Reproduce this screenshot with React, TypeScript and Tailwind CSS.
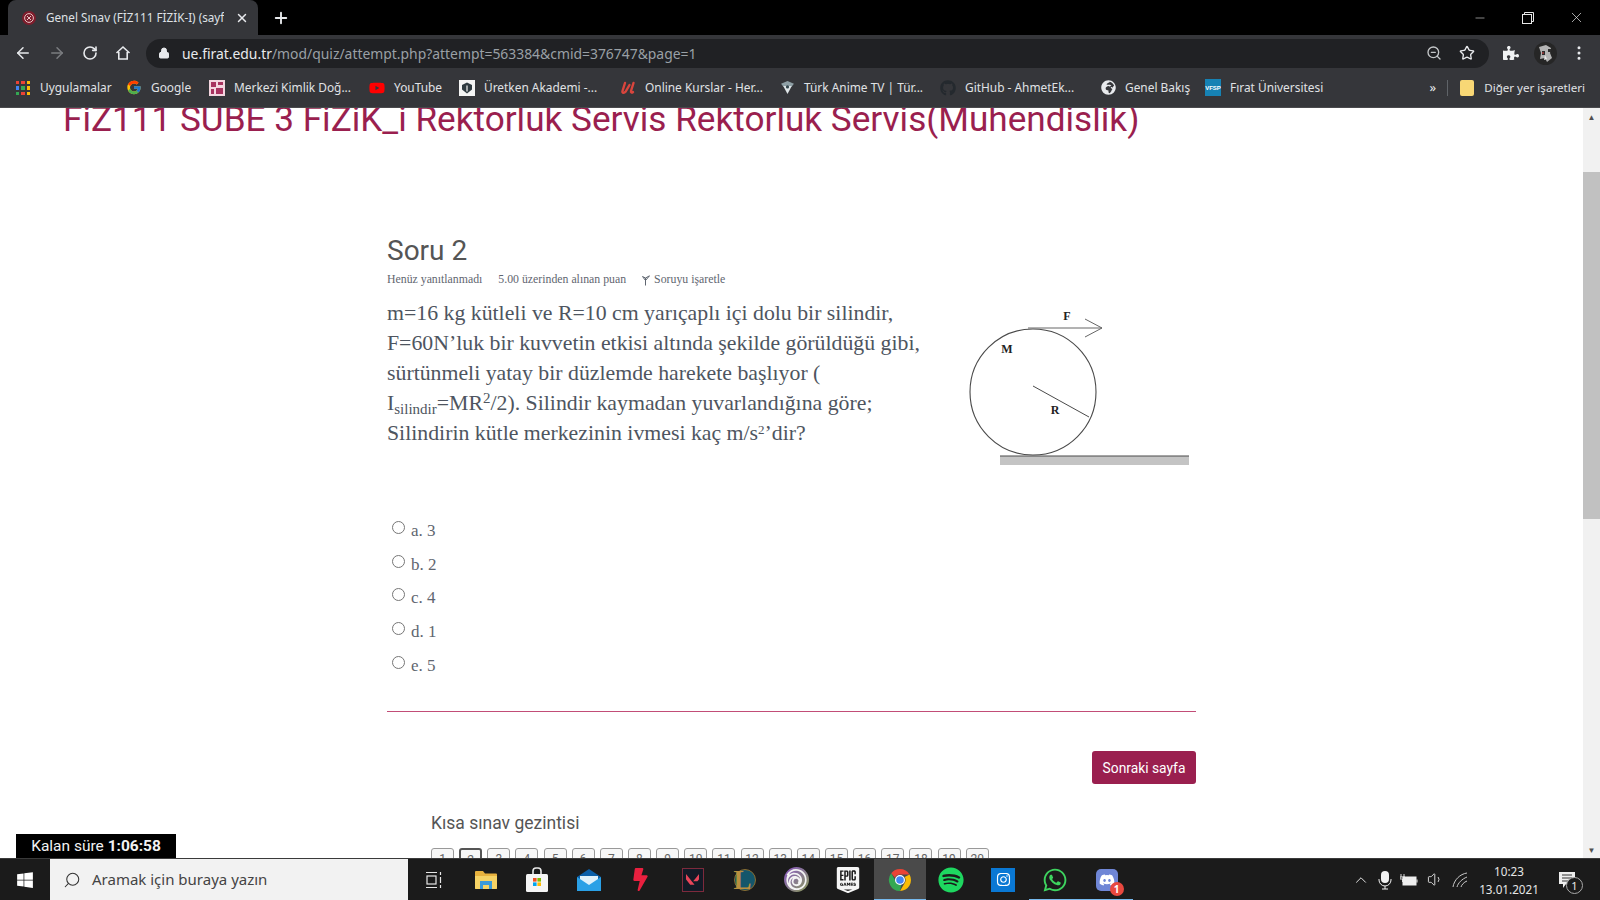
import { ArrowLeft, ArrowRight, RotateCw, Lock, Star, ZoomOut, Plus, X, Minus, EllipsisVertical, ChevronUp, Volume1, Search } from "lucide-react"
import { FaYoutube, FaGithub, FaGlobeAfrica, FaWindows, FaSpotify, FaWhatsapp, FaDiscord, FaPuzzlePiece, FaInstagram, FaBolt } from "react-icons/fa"
import { FcGoogle } from "react-icons/fc"
import { SiUbisoft, SiValorant, SiEpicgames } from "react-icons/si"

const body = "font-['Liberation_Serif',serif]"
const ui = "font-['Noto_Sans',sans-serif]"

function HomeIcon() {
    return <svg width="16" height="16" viewBox="0 0 16 16" fill="none" stroke="#e8eaed" strokeWidth="1.6">
        <path d="M1.5 8 8 2l6.5 6M3.8 7v7h8.4V7" />
    </svg>
}

function AppsIcon() {
    const colors = ["#ea4335", "#ea4335", "#fbbc04", "#4285f4", "#34a853", "#fbbc04", "#34a853", "#ea4335", "#fbbc04"]
    return <div className="grid grid-cols-3 gap-[2px] w-[14px]">
        {colors.map((c, i) => <span key={i} className="w-[3.3px] h-[3.3px]" style={{ backgroundColor: c }} />)}
    </div>
}

function Favicon() {
    return <svg width="16" height="16" viewBox="0 0 16 16">
        <circle cx="8" cy="8" r="7" fill="#7d1d2c" />
        <circle cx="8" cy="8" r="4.4" fill="none" stroke="#e6c2c2" strokeWidth="1" />
        <path d="M6 6l4 4M10 6l-4 4" stroke="#e6c2c2" strokeWidth="1" />
    </svg>
}

function MerkeziIcon() {
    return <svg width="16" height="16" viewBox="0 0 16 16">
        <rect width="16" height="16" fill="#f3d5df" />
        <rect x="2" y="2" width="5" height="5" fill="#a8325f" />
        <rect x="9" y="2" width="5" height="3" fill="#a8325f" />
        <rect x="2" y="9" width="3" height="5" fill="#a8325f" />
        <rect x="7" y="8" width="7" height="6" fill="#a8325f" />
    </svg>
}

function UretkenIcon() {
    return <svg width="16" height="16" viewBox="0 0 16 16">
        <rect width="16" height="16" fill="#f4f4f4" />
        <path d="M8 2.5 13 5v4.5L8 13.5 3 9.500V5z" fill="#2f3a40" />
        <path d="M8 5.500v6" stroke="#f4f4f4" strokeWidth="1.2" />
    </svg>
}

function UdemyIcon() {
    return <svg width="16" height="16" viewBox="0 0 16 16" fill="none" stroke="#d9453d" strokeWidth="2.4" strokeLinecap="round">
        <path d="M5 3 2.500 11c-.6 2 1.500 2.500 3 .8L9.500 5M13.500 3 11 11c-.4 1.600.8 2 2 1" />
    </svg>
}

function AnimeIcon() {
    return <svg width="15" height="15" viewBox="0 0 14 14">
        <path d="M1 3.500 7 1l6 2.500-2 2.500H3z" fill="#8fa0a6" />
        <path d="M3 5.500h8L7 13z" fill="#dfe6e8" />
        <circle cx="7" cy="6.500" r="1.500" fill="#34474e" />
    </svg>
}

function VfspIcon() {
    return <div className="w-[17px] h-[17px] bg-[#1682b4] flex items-center justify-center text-white font-bold text-[6px] leading-none font-['Liberation_Sans',sans-serif]">VFSP</div>
}

function Avatar() {
    return <svg width="23" height="23" viewBox="0 0 23 23">
        <circle cx="11.500" cy="11.500" r="11.500" fill="#262626" />
        <path d="M5 5 12 3l5 3-1 5 2 5-5 4-2-4-5 1 1-6z" fill="#b4b4b4" />
        <path d="M8 9h3v4H8zM14 7h3v3h-3z" fill="#2c2c2c" />
        <path d="M11 13l2 4-3 1z" fill="#e8e8e8" />
        <circle cx="9" cy="11" r="1" fill="#a23a3a" />
    </svg>
}

function FlagIcon() {
    return <svg width="8" height="11" viewBox="0 0 8 11" fill="none" stroke="#5f6670" strokeWidth="1">
        <path d="M.5 1.500 3.500 3 7.500.8 M3.500 3v7.500M.5 1.500l3 4 4-4.700" />
    </svg>
}

function ChromeIcon() {
    return <svg width="24" height="24" viewBox="0 0 24 24">
        <path d="M12 1a11 11 0 0 1 9.500 5.500H12a5.500 5.500 0 0 0-5 3.200L3.200 5.300A11 11 0 0 1 12 1z" fill="#ea4335" />
        <path d="M21.500 6.500A11 11 0 0 1 12 23l4.800-8.200A5.500 5.500 0 0 0 16.700 9z" fill="#fbbc04" />
        <path d="M12 23A11 11 0 0 1 3.200 5.300L7.800 13.500a5.500 5.500 0 0 0 5.500 3z" fill="#34a853" />
        <circle cx="12" cy="12" r="4.400" fill="#4285f4" stroke="#fff" strokeWidth="1.200" />
    </svg>
}

function TaskView() {
    return <svg width="18" height="18" viewBox="0 0 18 18" fill="none" stroke="#e6e6e6" strokeWidth="1.200">
        <path d="M1 1.500h11M1 16.500h11" />
        <rect x="2" y="5" width="9" height="8" />
        <path d="M15.500 1v3M15.500 6v6M15.500 14v3" />
    </svg>
}

function ExplorerIcon() {
    return <svg width="24" height="22" viewBox="0 0 24 22">
        <path d="M1 3a1 1 0 0 1 1-1h7l2 2.500h11a1 1 0 0 1 1 1V19a1 1 0 0 1-1 1H2a1 1 0 0 1-1-1z" fill="#e8b23e" />
        <path d="M1 7h22v12a1 1 0 0 1-1 1H2a1 1 0 0 1-1-1z" fill="#f6d365" />
        <path d="M6 12h12v8h-3v-4H9v4H6z" fill="#3b9ad9" />
    </svg>
}

function StoreIcon() {
    return <svg width="24" height="26" viewBox="0 0 24 26">
        <path d="M8 7V4a3 3 0 0 1 3-3h2a3 3 0 0 1 3 3v3" fill="none" stroke="#e8e8e8" strokeWidth="1.600" />
        <rect x="1" y="7" width="22" height="18" rx="1.500" fill="#f5f5f5" />
        <rect x="8" y="11" width="3.600" height="3.600" fill="#f25022" />
        <rect x="12.400" y="11" width="3.600" height="3.600" fill="#7fba00" />
        <rect x="8" y="15.400" width="3.600" height="3.600" fill="#00a4ef" />
        <rect x="12.400" y="15.400" width="3.600" height="3.600" fill="#ffb900" />
    </svg>
}

function MailIcon() {
    return <svg width="26" height="24" viewBox="0 0 26 24">
        <path d="M1 9 13 1l12 8v14H1z" fill="#0b5fa8" />
        <path d="M4 8h18v9l-9 4-9-4z" fill="#dff1fb" />
        <path d="M1 9v14h24V9L13 17z" fill="#2aa0e6" />
    </svg>
}

function LolIcon() {
    return <div className="relative w-[26px] h-[26px]">
        <div className="w-[22px] h-[22px] mt-[2px] rounded-full bg-[#14566b] ml-[3px] border border-[#8a6d30]" />
        <div className="absolute left-[2px] top-0 text-[27px] leading-[26px] font-bold text-[#b98f3e] font-['Liberation_Serif',serif]">L</div>
    </div>
}

function TrayMic() {
    return <svg width="14" height="20" viewBox="0 0 14 20" fill="none">
        <rect x="3" y="1" width="8" height="12" rx="4" fill="#f0f0f0" />
        <path d="M1 9v1a6 6 0 0 0 12 0V9M7 16v3M4 19h6" stroke="#f0f0f0" strokeWidth="1" />
    </svg>
}

function TrayBattery() {
    return <svg width="18" height="14" viewBox="0 0 18 14" fill="none">
        <rect x="3" y="4" width="13" height="8" fill="#eeeeee" stroke="#eeeeee" />
        <path d="M17 6.500v3" stroke="#eee" />
        <path d="M1 1v3M4 1v3M0 4h5v2H0zM2.500 6v3" stroke="#eee" strokeWidth=".9" />
    </svg>
}

function Diagram() {
    return <svg width="260" height="180" viewBox="0 0 260 180" fill="none" stroke="#4a4a4a" className="shrink-0 mt-[1px]">
        <circle cx="83" cy="93" r="63" strokeWidth="1.100" />
        <path d="M83 87 139 118" strokeWidth="1" />
        <path d="M78 29h74M135 20l17 9-17 9" stroke="#666" strokeWidth="1" />
        <rect x="50" y="157" width="189" height="9" fill="#c4c4c4" stroke="none" />
        <path d="M50 157h189" strokeWidth="1.200" />
        <text x="117" y="21" textAnchor="middle" fill="#222" stroke="none" className="font-['Liberation_Serif',serif] font-bold text-[12px]">F</text>
        <text x="57" y="54" textAnchor="middle" fill="#222" stroke="none" className="font-['Liberation_Serif',serif] font-bold text-[12px]">M</text>
        <text x="105" y="115" textAnchor="middle" fill="#222" stroke="none" className="font-['Liberation_Serif',serif] font-bold text-[12px]">R</text>
    </svg>
}

const bookmarks = [
    { label: "Uygulamalar", width: "w-[111px]", icon: <AppsIcon /> },
    { label: "Google", width: "w-[83px]", icon: <FcGoogle size={17} /> },
    { label: "Merkezi Kimlik Doğ...", width: "w-[160px]", icon: <MerkeziIcon /> },
    { label: "YouTube", width: "w-[90px]", icon: <FaYoutube size={16} color="#f00" /> },
    { label: "Üretken Akademi -...", width: "w-[161px]", icon: <UretkenIcon /> },
    { label: "Online Kurslar - Her...", width: "w-[159px]", icon: <UdemyIcon /> },
    { label: "Türk Anime TV | Tür...", width: "w-[161px]", icon: <AnimeIcon /> },
    { label: "GitHub - AhmetEk...", width: "w-[160px]", icon: <FaGithub size={16} color="#24292e" /> },
    { label: "Genel Bakış", width: "w-[105px]", icon: <FaGlobeAfrica size={15} color="#e8eaed" /> },
    { label: "Fırat Üniversitesi", width: "w-[110px]", icon: <VfspIcon /> },
]

const options = ["a. 3", "b. 2", "c. 4", "d. 1", "e. 5"]
const pages = Array.from({ length: 20 }, (_, i) => i + 1)

const taskApps = [
    { key: "task", icon: <TaskView /> },
    { key: "files", icon: <ExplorerIcon /> },
    { key: "store", icon: <StoreIcon /> },
    { key: "mail", icon: <MailIcon /> },
    { key: "bolt", icon: <FaBolt size={23} color="#e9203f" /> },
    { key: "valorant", icon: <div className="w-[22px] h-[24px] border border-[#7d2a3c] bg-[#121a26] flex items-center justify-center"><SiValorant size={13} color="#e8455a" /></div> },
    { key: "lol", icon: <LolIcon /> },
    { key: "ubi", icon: <div className="w-[25px] h-[25px] rounded-full bg-gradient-to-br from-[#8a4fc0] to-[#8a9a50] flex items-center justify-center"><SiUbisoft size={21} color="#f4f4f4" /></div> },
    { key: "epic", icon: <SiEpicgames size={26} color="#f5f5f5" /> },
    { key: "chrome", icon: <ChromeIcon />, active: true, running: true },
    { key: "spotify", icon: <FaSpotify size={26} color="#1ed760" /> },
    { key: "insta", icon: <div className="w-[24px] h-[24px] bg-[#0a78d4] flex items-center justify-center"><FaInstagram size={15} color="#fff" /></div> },
    { key: "whatsapp", icon: <FaWhatsapp size={26} color="#3ed45f" />, running: true },
    { key: "discord", icon: <div className="relative w-[22px] h-[22px] rounded-[5px] bg-[#6f86d6] flex items-center justify-center"><FaDiscord size={16} color="#fff" /><span className="absolute -right-[6px] -bottom-[5px] w-[14px] h-[14px] rounded-full bg-[#e8483f] text-white text-[10px] leading-[14px] text-center font-bold">1</span></div>, running: true },
]

export default function App() {
    return <div className={`h-screen w-screen overflow-hidden flex flex-col bg-white ${ui}`}>
        {/* tab strip */}
        <div className="h-[35px] bg-black flex items-end shrink-0">
            <div className="ml-[8px] w-[250px] h-[35px] bg-[#35363a] rounded-t-lg flex items-center pl-[13px] pr-[9px]">
                <Favicon />
                <span className="ml-[9px] w-[178px] overflow-hidden whitespace-nowrap text-[11.7px] text-[#dfe1e5]">Genel Sınav (FİZ111 FİZİK-I) (sayfa</span>
                <X size={14} color="#e8eaed" strokeWidth={2.5} className="ml-auto" />
            </div>
            <Plus size={18} color="#e8eaed" strokeWidth={2.5} className="ml-[14px] mb-[8px]" />
            <div className="ml-auto h-[35px] flex items-center text-[#e8e8e8]">
                <div className="w-[48px] flex justify-center"><Minus size={14} strokeWidth={1} /></div>
                <div className="w-[48px] flex justify-center">
                    <svg width="12" height="12" viewBox="0 0 12 12" fill="none" stroke="#e8e8e8"><rect x=".5" y="2.500" width="9" height="9" /><path d="M2.500 2.500V.5h9v9H9.500" /></svg>
                </div>
                <div className="w-[48px] flex justify-center"><X size={17} strokeWidth={1} /></div>
            </div>
        </div>

        {/* toolbar */}
        <div className="h-[36px] bg-[#35363a] flex items-center shrink-0 pl-[14px] pr-[12px]">
            <ArrowLeft size={18} color="#e8eaed" />
            <ArrowRight size={18} color="#7b7d80" className="ml-[16px]" />
            <RotateCw size={16} color="#e8eaed" strokeWidth={2.4} className="ml-[16px]" />
            <div className="ml-[17px]"><HomeIcon /></div>
            <div className="ml-[15px] flex-1 h-[29px] rounded-full bg-[#202124] flex items-center pl-[12px] pr-[14px]">
                <Lock size={12} color="#e8eaed" fill="#e8eaed" />
                <span className="ml-[12px] pt-[2px] text-[13.900px] text-[#e8eaed]">ue.firat.edu.tr<span className="text-[#9aa0a6]">/mod/quiz/attempt.php?attempt=563384&amp;cmid=376747&amp;page=1</span></span>
                <ZoomOut size={16} color="#c4c7c9" className="ml-auto" />
                <Star size={16} color="#e8eaed" className="ml-[17px]" />
            </div>
            <FaPuzzlePiece size={16} color="#f1f3f4" className="ml-[14px]" />
            <div className="ml-[15px]"><Avatar /></div>
            <EllipsisVertical size={18} color="#e8eaed" className="ml-[13px]" />
        </div>

        {/* bookmarks */}
        <div className="h-[37px] bg-[#35363a] flex items-center shrink-0 pl-[15px] pr-[15px] pb-[2px] border-b border-[#4a4a4d] text-[11.900px] text-[#e0e2e5]">
            <div className="flex items-center">
                {bookmarks.map(({ label, width, icon }) => <div key={label} className={`flex items-center gap-[9px] whitespace-nowrap ${width}`}>
                    <span className="w-[16px] flex justify-center">{icon}</span>
                    <span>{label}</span>
                </div>)}
            </div>
            <span className="ml-auto text-[13px] text-[#e8eaed]">»</span>
            <div className="ml-[11px] w-px h-[16px] bg-[#5f6368]" />
            <div className="ml-[12px] w-[14px] h-[16px] rounded-[2px] bg-[#f8d775]" />
            <span className="ml-[10px] text-[11.600px]">Diğer yer işaretleri</span>
        </div>

        {/* page */}
        <div className="relative flex-1 min-h-0 flex overflow-hidden">
            <main className="flex-1 min-w-0 overflow-hidden">
                <h1 className="mt-[-11px] ml-[63px] text-[35.150px] leading-[44px] whitespace-nowrap text-[#9a1f4f] font-['Roboto',sans-serif]">FiZ111 SUBE 3 FiZiK_i Rektorluk Servis Rektorluk Servis(Muhendislik)</h1>

                <div className="ml-[387px] w-[809px] mt-[92px]">
                    <h2 className="text-[28px] leading-[36px] text-[#555] font-['Roboto',sans-serif]">Soru 2</h2>
                    <div className={`mt-[2px] flex items-center text-[11.800px] leading-[16px] text-[#5f6670] ${body}`}>
                        <span>Henüz yanıtlanmadı</span>
                        <span className="ml-[16px]">5.00 üzerinden alınan puan</span>
                        <span className="ml-[16px] mr-[4px] mt-[2px]"><FlagIcon /></span>
                        <span>Soruyu işaretle</span>
                    </div>
                    <div className="flex mt-[11px]">
                        <div className={`w-[563px] shrink-0 text-[21.800px] leading-[30px] text-[#4e5560] ${body}`}>
                            <p>m=16 kg kütleli ve R=10 cm yarıçaplı içi dolu bir silindir,</p>
                            <p>F=60N’luk bir kuvvetin etkisi altında şekilde görüldüğü gibi,</p>
                            <p>sürtünmeli yatay bir düzlemde harekete başlıyor (</p>
                            <p>I<sub className="text-[15px]">silindir</sub>=MR<sup className="text-[15px]">2</sup>/2). Silindir kaymadan yuvarlandığına göre;</p>
                            <p>Silindirin kütle merkezinin ivmesi kaç m/s<sup className="text-[13px]">2</sup>’dir?</p>
                        </div>
                        <Diagram />
                    </div>

                    <div className="mt-[38px] flex flex-col">
                        {options.map((o) => <label key={o} className={`h-[33.700px] flex items-start text-[17px] leading-[24px] text-[#5f6670] ${body}`}>
                            <input type="radio" name="q2" className="ml-[5px] mt-[4px] w-[13px] h-[13px]" />
                            <span className="ml-[6px] mt-[2px]">{o}</span>
                        </label>)}
                    </div>

                    <div className="mt-[26px] h-px bg-[#c24d77]" />

                    <div className="mt-[39px] flex justify-end">
                        <button className="w-[104px] h-[33px] pt-[1px] rounded-[3px] bg-[#9a1f4f] text-white text-[13.800px] font-['Roboto',sans-serif]">Sonraki sayfa</button>
                    </div>

                    <div className="ml-[44px] mt-[27px]">
                        <h3 className="text-[17.500px] leading-[24px] text-[#555] font-['Roboto',sans-serif]">Kısa sınav gezintisi</h3>
                        <div className="mt-[13px] flex gap-[5.150px]">
                            {pages.map((p) => <div key={p} className={`w-[23px] h-[24px] shrink-0 rounded-[3px] bg-[#f7f7f7] flex items-start justify-center text-[12px] leading-[20px] text-[#666] font-['Roboto',sans-serif] ${p === 2 ? "border-2 border-[#555]" : "border border-[#999]"}`}>{p}</div>)}
                        </div>
                    </div>
                </div>
            </main>

            {/* scrollbar */}
            <div className="w-[17px] shrink-0 bg-[#f1f1f1] flex flex-col items-center">
                <div className="h-[17px] flex items-center text-[8px] text-[#505050]">▲</div>
                <div className="mt-[47px] h-[347px] w-full bg-[#c1c1c1]" />
                <div className="mt-auto h-[17px] flex items-center text-[8px] text-[#505050]">▼</div>
            </div>

            {/* timer */}
            <div className="absolute left-[16px] bottom-0 w-[160px] h-[24px] pt-[2px] bg-black flex items-center justify-center text-[15.500px] text-[#f2f2f2] font-['Roboto',sans-serif]">
                Kalan süre&nbsp;<b>1:06:58</b>
            </div>
        </div>

        {/* taskbar */}
        <div className="h-[42px] bg-[#1b1b1b] flex items-center shrink-0 border-t border-[#3a3a3a]">
            <div className="w-[50px] flex justify-center"><FaWindows size={18} color="#fff" /></div>
            <div className="w-[358px] h-[42px] bg-[#f2f2f2] flex items-center pl-[13px] text-[15px] text-[#444]">
                <Search size={18} color="#333" strokeWidth={1.4} className="-scale-x-100" />
                <span className="ml-[11px]">Aramak için buraya yazın</span>
            </div>
            <div className="flex">
                {taskApps.map(({ key, icon, active, running }) => <div key={key} className={`relative w-[51.750px] h-[42px] flex items-center justify-center ${active ? "bg-[#4a4a4a]" : ""}`}>
                    {icon}
                    {running && <span className="absolute left-0 right-0 bottom-0 h-[2px] bg-[#76b9ed]" />}
                </div>)}
            </div>
            <div className="ml-auto flex items-center text-[#e6e6e6]">
                <ChevronUp size={18} strokeWidth={1.3} />
                <div className="ml-[8px]"><TrayMic /></div>
                <div className="ml-[8px]"><TrayBattery /></div>
                <Volume1 size={17} strokeWidth={1.3} className="ml-[9px]" />
                <svg width="18" height="18" viewBox="0 0 18 18" fill="none" stroke="#c9c9c9" className="ml-[7px]"><path d="M2 16C3 9 9 3 16 2M6 16c1-4 5-8 10-10M10 16c.5-2 3-5 6-6" /></svg>
                <div className="ml-[6px] w-[68px] text-center text-[11.700px] leading-[18px]"><div>10:23</div><div>13.01.2021</div></div>
                <div className="relative ml-[14px] mr-[23px]">
                    <svg width="20" height="18" viewBox="0 0 20 18" fill="#eee"><path d="M2 1h16v12H9l-3 4v-4H2z" /><path d="M5 4h10M5 7h10M5 10h7" stroke="#333" /></svg>
                    <span className="absolute -right-[6px] -bottom-[5px] w-[17px] h-[17px] rounded-full border border-[#aaa] bg-[#1b1b1b] text-[11px] leading-[15px] text-center">1</span>
                </div>
            </div>
        </div>
    </div>
}
